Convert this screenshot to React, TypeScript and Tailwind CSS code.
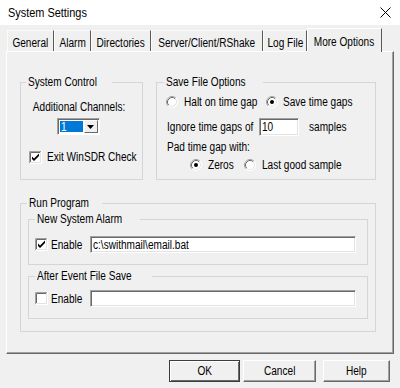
import React from "react";

const font = "font-['Liberation_Sans',Arial,sans-serif]";

function T({ children, center }: { children: React.ReactNode; center?: boolean }) {
  return (
    <span
      className={
        "inline-block whitespace-nowrap scale-x-[0.84] " + (center ? "origin-center" : "origin-left")
      }
    >
      {children}
    </span>
  );
}

function CheckBox({ checked }: { checked?: boolean }) {
  return (
    <svg width="13" height="13" viewBox="0 0 13 13" className="shrink-0 block">
      <rect x="0" y="0" width="13" height="13" fill="#ffffff" />
      <path d="M0.5 12.5V0.5H12.5" stroke="#a0a0a0" fill="none" />
      <path d="M1.5 11V1.5H11" stroke="#696969" fill="none" />
      <path d="M0.5 12.5H12.5V0" stroke="#ffffff" fill="none" />
      <path d="M1.5 11.5H11.5V1" stroke="#e3e3e3" fill="none" />
      {checked && <path d="M3 5.5L5 7.5L10 2.5V5L5 10L3 8Z" fill="#000000" />}
    </svg>
  );
}

function Radio({ checked }: { checked?: boolean }) {
  return (
    <svg width="12" height="12" viewBox="0 0 12 12" className="shrink-0 block">
      <circle cx="6" cy="6" r="5.5" fill="#ffffff" />
      <path d="M2.11 9.89A5.5 5.5 0 0 1 9.89 2.11" stroke="#a0a0a0" fill="none" />
      <path d="M2.82 9.18A4.5 4.5 0 0 1 9.18 2.82" stroke="#696969" fill="none" />
      <path d="M2.11 9.89A5.5 5.5 0 0 0 9.89 2.11" stroke="#ffffff" fill="none" />
      <path d="M2.82 9.18A4.5 4.5 0 0 0 9.18 2.82" stroke="#e3e3e3" fill="none" />
      {checked && <circle cx="6" cy="6" r="2" fill="#000000" />}
    </svg>
  );
}

function TextBox({ value, className }: { value?: string; className: string }) {
  return (
    <div
      className={
        "shrink-0 bg-white border border-t-[#a0a0a0] border-l-[#a0a0a0] border-r-white border-b-white shadow-[inset_1px_1px_0_#696969,inset_-1px_-1px_0_#e3e3e3] flex items-center pl-[2px] overflow-hidden " +
        className
      }
    >
      {value && <T>{value}</T>}
    </div>
  );
}

function Tab({ label, w, selected }: { label: string; w: string; selected?: boolean }) {
  if (selected) {
    return (
      <div
        className={
          "relative z-10 h-[24px] mb-[-1px] bg-[#f0f0f0] border-t border-l border-r border-t-white border-l-white border-r-[#5a5a5a] flex justify-center pt-[6px] " +
          w
        }
      >
        <T center>{label}</T>
      </div>
    );
  }
  return (
    <div
      className={
        "h-[21px] border-t border-l border-r border-t-[#fbfbfb] border-l-[#fbfbfb] border-r-[#5a5a5a] flex justify-center pt-[5px] " +
        w
      }
    >
      <T center>{label}</T>
    </div>
  );
}

function Button({ label, w, def }: { label: string; w: string; def?: boolean }) {
  return (
    <div
      className={
        "h-[22px] flex items-center justify-center bg-[#f0f0f0] border " +
        (def
          ? "border-[#3c3c3c] shadow-[inset_1px_1px_0_#ffffff,inset_-1px_-1px_0_#696969] "
          : "border-t-white border-l-white border-r-[#696969] border-b-[#696969] shadow-[inset_-1px_-1px_0_#a0a0a0] ") +
        w
      }
    >
      <T center>{label}</T>
    </div>
  );
}

export default function App() {
  return (
    <div className={"w-[400px] h-[388px] bg-[#f0f0f0] overflow-hidden text-black text-[12px] leading-[14px] " + font}>
      {/* title bar */}
      <div className="h-[25px] bg-white flex items-center justify-between pl-[8px] pr-[9px]">
        <span className="text-[13px] leading-[16px]">
          <T>System Settings</T>
        </span>
        <svg width="11" height="11" viewBox="0 0 11 11" className="block">
          <path d="M0.5 0.5L10.5 10.5M10.5 0.5L0.5 10.5" stroke="#000" strokeWidth="1" />
        </svg>
      </div>

      {/* tabs */}
      <div className="h-[26px] flex items-end pl-[7px]">
        <Tab label="General" w="w-[47px]" />
        <Tab label="Alarm" w="w-[37px]" />
        <Tab label="Directories" w="w-[60px]" />
        <Tab label="Server/Client/RShake" w="w-[112px]" />
        <Tab label="Log File" w="w-[44px]" />
        <Tab label="More Options" w="w-[75px]" selected />
      </div>

      {/* panel */}
      <div className="ml-[6px] w-[388px] h-[303px] border border-t-white border-l-white border-r-[#696969] border-b-[#696969] shadow-[inset_-1px_-1px_0_#a0a0a0]">
        <div className="mt-[23px] flex pl-[13px] gap-[13px]">
          {/* System Control */}
          <fieldset className="w-[123px] min-w-0 shrink-0 h-[105px] border border-[#d5d5d5]">
            <legend className="ml-[5px] px-[2px] leading-[14px]">
              <T>System Control</T>
            </legend>
            <div className="mt-[11px] flex justify-center pr-[4px]">
              <T center>Additional Channels:</T>
            </div>
            <div className="mt-[4px] ml-[36px] w-[43px] h-[17px] bg-white border border-t-[#a0a0a0] border-l-[#a0a0a0] border-r-white border-b-white shadow-[inset_1px_1px_0_#696969] flex items-stretch p-[1px]">
              <div className="w-[24px] bg-[#0078d7] text-white pl-[1px] leading-[13px] ml-[1px] my-[1px]">
                <T>1</T>
              </div>
              <div className="ml-[1px] w-[15px] bg-[#f0f0f0] border border-t-white border-l-white border-r-[#696969] border-b-[#696969] flex items-center justify-center">
                <svg width="7" height="4" viewBox="0 0 7 4" className="block">
                  <path d="M0 0H7L3.5 4Z" fill="#000" />
                </svg>
              </div>
            </div>
            <div className="mt-[15px] pl-[8px] flex items-center gap-[5px]">
              <CheckBox checked />
              <T>Exit WinSDR Check</T>
            </div>
          </fieldset>

          {/* Save File Options */}
          <fieldset className="w-[220px] min-w-0 shrink-0 h-[105px] border border-[#d5d5d5]">
            <legend className="ml-[7px] px-[2px] leading-[14px]">
              <T>Save File Options</T>
            </legend>
            <div className="pl-[9px]">
              <div className="mt-[6px] h-[14px] flex items-center">
                <div className="w-[100px] shrink-0 flex items-center gap-[6px]">
                  <Radio />
                  <T>Halt on time gap</T>
                </div>
                <div className="flex items-center gap-[5px]">
                  <Radio checked />
                  <T>Save time gaps</T>
                </div>
              </div>
              <div className="mt-[9px] h-[18px] flex items-center pl-[1px]">
                <div className="w-[92px] shrink-0">
                  <T>Ignore time gaps of</T>
                </div>
                <TextBox value="10" className="w-[40px] h-[18px]" />
                <div className="ml-[10px]">
                  <T>samples</T>
                </div>
              </div>
              <div className="mt-[4px] pl-[1px]">
                <T>Pad time gap with:</T>
              </div>
              <div className="mt-[4px] h-[14px] flex items-center pl-[24px]">
                <div className="w-[54px] shrink-0 flex items-center gap-[6px]">
                  <Radio checked />
                  <T>Zeros</T>
                </div>
                <div className="flex items-center gap-[6px]">
                  <Radio />
                  <T>Last good sample</T>
                </div>
              </div>
            </div>
          </fieldset>
        </div>

        {/* Run Program */}
        <fieldset className="mt-[16px] ml-[13px] w-[356px] min-w-0 h-[136px] border border-[#d5d5d5]">
          <legend className="ml-[6px] px-[2px] leading-[14px]">
            <T>Run Program</T>
          </legend>
          <div className="pl-[7px] pt-[2px]">
            <fieldset className="w-[340px] min-w-0 h-[53px] border border-[#d5d5d5]">
              <legend className="ml-[6px] px-[2px] leading-[14px]">
                <T>New System Alarm</T>
              </legend>
              <div className="mt-[10px] h-[17px] flex items-center pl-[6px]">
                <div className="w-[55px] shrink-0 flex items-center gap-[3px]">
                  <CheckBox checked />
                  <T>Enable</T>
                </div>
                <TextBox value="c:\swithmail\email.bat" className="w-[266px] h-[17px]" />
              </div>
            </fieldset>
            <fieldset className="mt-[4px] w-[340px] min-w-0 h-[50px] border border-[#d5d5d5]">
              <legend className="ml-[6px] px-[2px] leading-[14px]">
                <T>After Event File Save</T>
              </legend>
              <div className="mt-[7px] h-[17px] flex items-center pl-[6px]">
                <div className="w-[55px] shrink-0 flex items-center gap-[3px]">
                  <CheckBox />
                  <T>Enable</T>
                </div>
                <TextBox className="w-[266px] h-[17px]" />
              </div>
            </fieldset>
          </div>
        </fieldset>
      </div>

      {/* buttons */}
      <div className="mt-[6px] flex pl-[169px]">
        <Button label="OK" w="w-[71px]" def />
        <div className="ml-[3px]">
          <Button label="Cancel" w="w-[73px]" />
        </div>
        <div className="ml-[7px]">
          <Button label="Help" w="w-[67px]" />
        </div>
      </div>
    </div>
  );
}
